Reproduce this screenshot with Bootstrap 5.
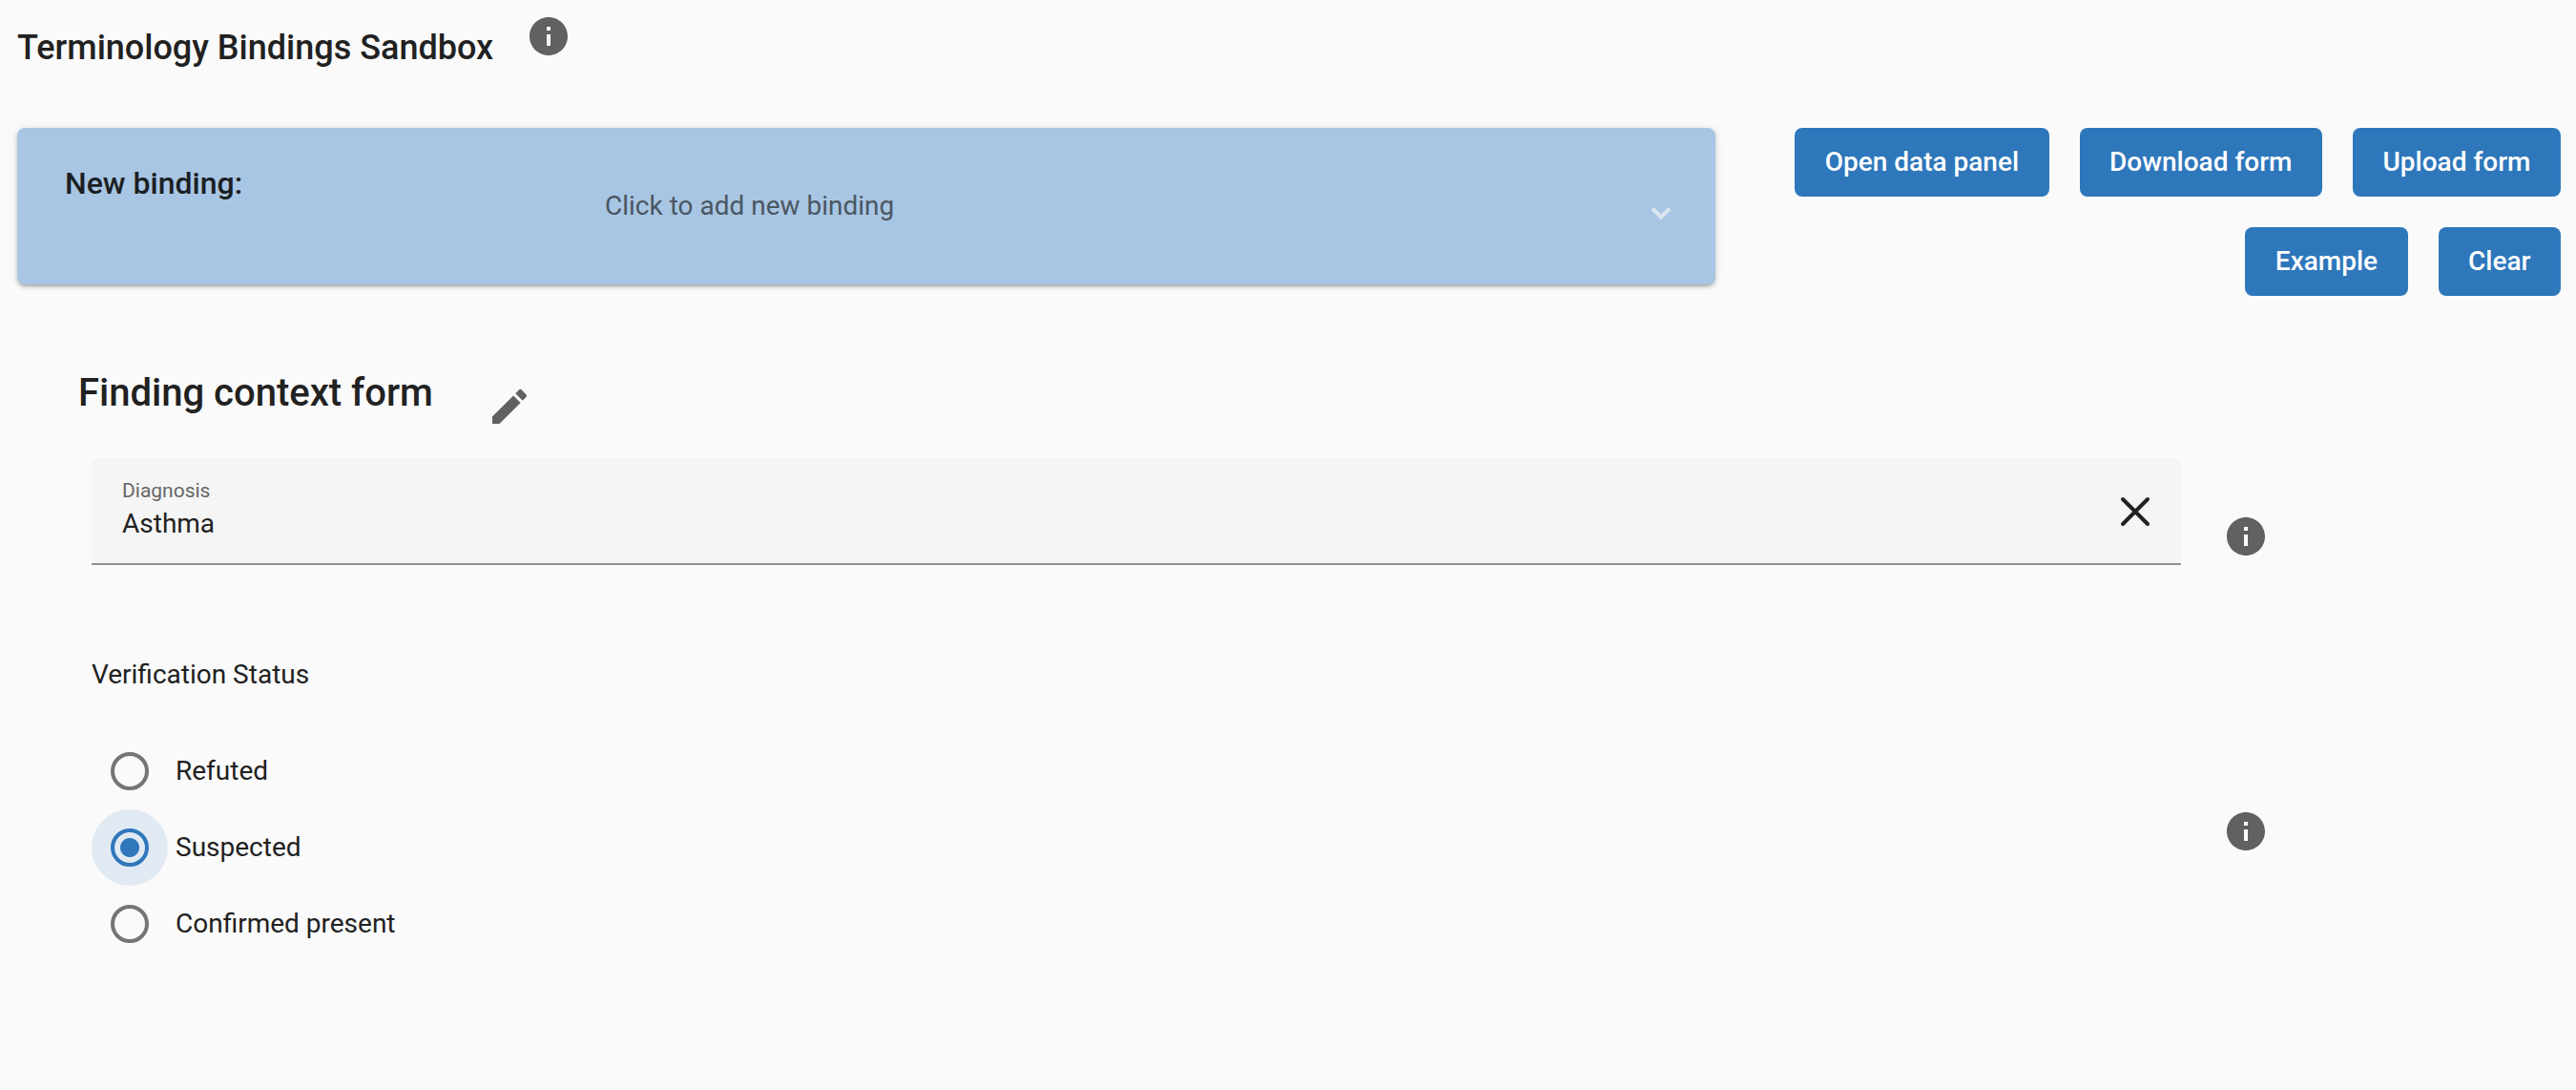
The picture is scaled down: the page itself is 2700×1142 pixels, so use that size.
<!DOCTYPE html>
<html lang="en">
<head>
<meta charset="utf-8">
<title>Terminology Bindings Sandbox</title>
<link rel="stylesheet" href="https://cdn.jsdelivr.net/npm/bootstrap@5.3.0/dist/css/bootstrap.min.css">
<style>
html,body{height:100%}
body{background:#fafafa;color:#212121;font-family:Roboto,"Liberation Sans",sans-serif;font-size:28px;line-height:40px;overflow:hidden}
.sb-page{padding:0 16px 0 18px}
.sb-head{height:134px;gap:34px}
.sb-title{font-size:36px;font-weight:500;line-height:40px;margin:30px 0 0;color:#212121}
.sb-info{width:48px;height:48px;fill:#616161;flex:none;display:block}
.sb-head .sb-info{margin-top:14px}
.sb-panel{width:1780px;height:164px;background:#a8c6e3;border-radius:8px;box-shadow:0 3px 3px -2px rgba(0,0,0,.2),0 3px 4px 0 rgba(0,0,0,.14),0 1px 8px 0 rgba(0,0,0,.12);padding-left:50px;flex:none}
.sb-panel-label{font-size:32px;font-weight:500;line-height:40px;width:566px;margin-top:38px;color:#1b1f24;flex:none}
.sb-panel-hint{font-size:28px;line-height:40px;color:#4a5662;margin-top:62px;flex:1}
.sb-chev{width:24px;height:14px;margin:82px 45px 0 0;flex:none}
.sb-actions{width:820px;gap:32px}
.sb-btn{background:#2e77bb;border:0;color:#fff;font-size:28px;font-weight:500;line-height:40px;height:72px;padding:16px 31.500px;border-radius:8px}
.sb-btn:hover,.sb-btn:active{background:#2e77bb!important;color:#fff!important}
.sb-form{padding:0 0 0 64px}
.sb-form-title{font-size:40px;font-weight:500;line-height:48px;margin:0;color:#212121}
.sb-form-head{margin-top:78px;height:92px;gap:56px}
.sb-edit{width:48px;height:48px;fill:#616161;margin-top:14px;flex:none}
.sb-row{margin-left:14px}
.sb-field{width:2190px;height:112px;background:#f5f5f5;border-bottom:2px solid #8f8f8f;border-radius:8px 8px 0 0;padding:20px 32px 0}
.sb-field-label{font-size:21px;line-height:29px;color:#666}
.sb-field-value{font-size:28px;line-height:40px;color:#212121}
.sb-x{width:48px;height:48px;stroke:#212121;stroke-width:2;fill:none;margin-right:-8px;margin-top:12px}
.sb-side{width:48px;margin-left:44px;flex:none}
.sb-side-a{margin-top:58px}
.sb-side-b{margin-top:160px}
.sb-vs{margin-top:95px}
.sb-vs-col{width:2190px;flex:none}
.sb-vs-label{font-size:28px;line-height:40px;color:#212121;margin-bottom:41px}
.sb-radio{height:80px;margin:0;padding:0;gap:8px}
.sb-radio .form-check-input{width:40px;height:40px;margin:0 20px;float:none;border:4px solid #757575;background:transparent;flex:none;box-shadow:none}
.sb-radio .form-check-input:checked{border-color:#2e77bb;background:radial-gradient(circle,#2e77bb 9.5px,#e1e9f3 10.5px);box-shadow:0 0 0 20px #e1e9f3}
.sb-radio .form-check-label{font-size:28px;line-height:40px;color:#212121}
</style>
</head>
<body>
<div class="sb-page">
  <div class="sb-head d-flex align-items-start">
    <h1 class="sb-title">Terminology Bindings Sandbox</h1>
    <svg class="sb-info" viewBox="0 0 24 24"><path d="M12 2C6.48 2 2 6.48 2 12s4.480 10 10 10 10-4.480 10-10S17.520 2 12 2zm1 15h-2v-6h2v6zm0-8h-2V7h2v2z"/></svg>
  </div>
  <div class="d-flex align-items-start justify-content-between">
    <div class="sb-panel d-flex align-items-start">
      <div class="sb-panel-label">New binding:</div>
      <div class="sb-panel-hint">Click to add new binding</div>
      <svg class="sb-chev" viewBox="0 0 24 14"><path d="M3 2.500 12 11.500 21 2.500" fill="none" stroke="#dde6ef" stroke-width="4"/></svg>
    </div>
    <div class="sb-actions d-flex flex-wrap justify-content-end">
      <button type="button" class="btn sb-btn">Open data panel</button>
      <button type="button" class="btn sb-btn">Download form</button>
      <button type="button" class="btn sb-btn">Upload form</button>
      <button type="button" class="btn sb-btn">Example</button>
      <button type="button" class="btn sb-btn">Clear</button>
    </div>
  </div>
  <div class="sb-form">
    <div class="sb-form-head d-flex align-items-start">
      <h2 class="sb-form-title">Finding context form</h2>
      <svg class="sb-edit" viewBox="0 0 24 24"><path d="M3 17.250V21h3.750L17.810 9.940l-3.750-3.750L3 17.250zM20.710 7.040a.996.996 0 0 0 0-1.410l-2.340-2.340a.996.996 0 0 0-1.410 0l-1.830 1.830 3.750 3.750 1.830-1.830z"/></svg>
    </div>
    <div class="sb-row d-flex align-items-start">
      <div class="sb-field d-flex align-items-start justify-content-between">
        <div>
          <div class="sb-field-label">Diagnosis</div>
          <div class="sb-field-value">Asthma</div>
        </div>
        <svg class="sb-x" viewBox="0 0 24 24"><path d="M5.500 5.500 18.500 18.500M18.500 5.500 5.500 18.500" stroke-linecap="round"/></svg>
      </div>
      <div class="sb-side sb-side-a">
        <svg class="sb-info" viewBox="0 0 24 24"><path d="M12 2C6.48 2 2 6.48 2 12s4.480 10 10 10 10-4.480 10-10S17.520 2 12 2zm1 15h-2v-6h2v6zm0-8h-2V7h2v2z"/></svg>
      </div>
    </div>
    <div class="sb-row sb-vs d-flex align-items-start">
      <div class="sb-vs-col">
        <div class="sb-vs-label">Verification Status</div>
        <div class="d-flex flex-column">
          <div class="form-check sb-radio d-flex align-items-center">
            <input class="form-check-input" type="radio" name="vs" id="r1">
            <label class="form-check-label" for="r1">Refuted</label>
          </div>
          <div class="form-check sb-radio d-flex align-items-center">
            <input class="form-check-input" type="radio" name="vs" id="r2" checked>
            <label class="form-check-label" for="r2">Suspected</label>
          </div>
          <div class="form-check sb-radio d-flex align-items-center">
            <input class="form-check-input" type="radio" name="vs" id="r3">
            <label class="form-check-label" for="r3">Confirmed present</label>
          </div>
        </div>
      </div>
      <div class="sb-side sb-side-b">
        <svg class="sb-info" viewBox="0 0 24 24"><path d="M12 2C6.48 2 2 6.48 2 12s4.480 10 10 10 10-4.480 10-10S17.520 2 12 2zm1 15h-2v-6h2v6zm0-8h-2V7h2v2z"/></svg>
      </div>
    </div>
  </div>
</div>
</body>
</html>
